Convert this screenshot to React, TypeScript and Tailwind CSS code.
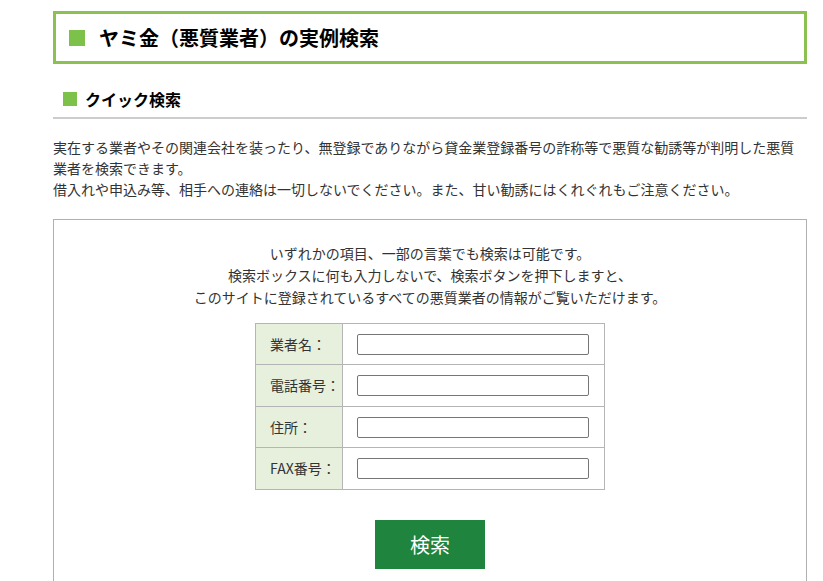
const fields = ['業者名：', '電話番号：', '住所：', 'FAX番号：'];
const rowHeights = ['h-[40px]', 'h-[42px]', 'h-[41px]', 'h-[42px]'];

export default function App() {
  return (
    <div
      className="min-h-screen bg-white pl-[53px] pr-[16px] text-[#333]"
      style={{ fontFamily: '"Noto Sans CJK JP", "Noto Sans", sans-serif' }}
    >
      {/* page title */}
      <div className="mt-[11px] flex h-[53px] items-center border-[3px] border-[#8cc152] pl-[13px]">
        <span className="h-4 w-4 bg-[#7cc24a]" />
        <h1 className="ml-[14px] text-[20px] font-bold leading-none text-black">
          ヤミ金（悪質業者）の実例検索
        </h1>
      </div>

      {/* quick search heading */}
      <div className="mt-[20px] flex h-[35px] items-center border-b-2 border-[#cccccc] pb-[4px] pl-[10px]">
        <span className="h-[14px] w-[14px] bg-[#7cc24a]" />
        <h2 className="ml-[8px] text-[16px] font-bold leading-none text-black">クイック検索</h2>
      </div>

      <p className="mt-[18px] text-[14px] leading-[21px]">
        実在する業者やその関連会社を装ったり、無登録でありながら貸金業登録番号の詐称等で悪質な勧誘等が判明した悪質業者を検索できます。
        <br />
        借入れや申込み等、相手への連絡は一切しないでください。また、甘い勧誘にはくれぐれもご注意ください。
      </p>

      <div className="mt-[19px] flex flex-col items-center border border-[#b0b0b0] pt-[22px] pb-[40px]">
        <p className="text-center text-[14px] leading-[22px]">
          いずれかの項目、一部の言葉でも検索は可能です。
          <br />
          検索ボックスに何も入力しないで、検索ボタンを押下しますと、
          <br />
          このサイトに登録されているすべての悪質業者の情報がご覧いただけます。
        </p>

        <div className="mt-[15px] w-[350px] border border-[#b5b5b5]">
          {fields.map((label, i) => (
            <div
              key={label}
              className={`flex ${rowHeights[i]} ${i > 0 ? 'border-t border-[#b5b5b5]' : ''}`}
            >
              <div className="flex w-[87px] items-center border-r border-[#b5b5b5] bg-[#e6f0dd] pl-[14px] text-[14px]">
                {label}
              </div>
              <div className="flex flex-1 items-center px-[14px]">
                <input
                  type="text"
                  className="h-[21px] w-[232px] rounded-[2px] border border-[#767676] bg-white px-1 text-[14px]"
                />
              </div>
            </div>
          ))}
        </div>

        <button
          type="button"
          className="mt-[30px] h-[49px] w-[110px] bg-[#1e843e] text-[20px] text-white"
        >
          検索
        </button>
      </div>
    </div>
  );
}
